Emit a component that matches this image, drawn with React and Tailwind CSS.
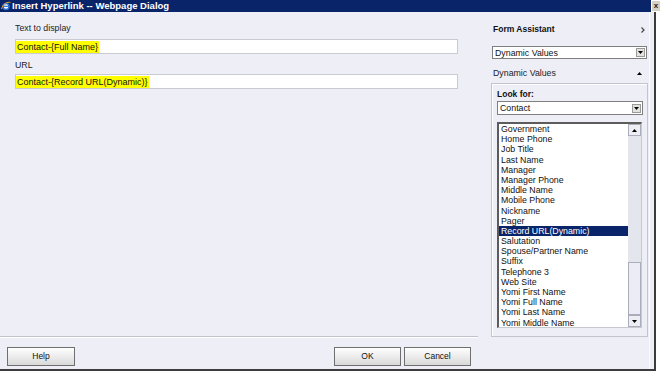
import React from 'react';

const fields = [
  'Government',
  'Home Phone',
  'Job Title',
  'Last Name',
  'Manager',
  'Manager Phone',
  'Middle Name',
  'Mobile Phone',
  'Nickname',
  'Pager',
  'Record URL(Dynamic)',
  'Salutation',
  'Spouse/Partner Name',
  'Suffix',
  'Telephone 3',
  'Web Site',
  'Yomi First Name',
  'Yomi Full Name',
  'Yomi Last Name',
  'Yomi Middle Name',
];

const DownArrow = () => (
  <svg width="5" height="3" viewBox="0 0 5 3">
    <path d="M0 0h5L2.5 3z" fill="#000" />
  </svg>
);

const UpArrow = () => (
  <svg width="5" height="3" viewBox="0 0 5 3">
    <path d="M0 3h5L2.5 0z" fill="#000" />
  </svg>
);

const DropButton = () => (
  <div className="w-[9px] h-[9px] bg-[#e4e2dc] border border-[#9a9a9a] flex items-center justify-center">
    <DownArrow />
  </div>
);

const Select = ({ value, className }) => (
  <div className={`bg-white border border-[#7f7f7f] flex items-center justify-between pl-[2px] pr-[1px] ${className}`}>
    <span className="text-[8.8px] leading-[10px] text-[#111]">{value}</span>
    <DropButton />
  </div>
);

const Button = ({ label, className }) => (
  <button className={`h-[19px] border border-[#6f6f6f] bg-gradient-to-b from-white to-[#d9d9d9] text-[8.5px] text-[#111] ${className}`}>
    {label}
  </button>
);

const IeIcon = () => (
  <svg width="10" height="10" viewBox="0 0 10 10">
    <circle cx="5" cy="5.5" r="3" fill="#fff" stroke="#2a6fd6" strokeWidth="1.5" />
    <path d="M2.2 5.3h5.6" stroke="#2a6fd6" strokeWidth="1.2" />
    <path d="M0.5 8C2 2.5 6.5 0.5 9.5 1.5" fill="none" stroke="#f0a020" strokeWidth="1" />
  </svg>
);

export default function App() {
  return (
    <div className="w-[660px] h-[374px] bg-white overflow-hidden font-['Liberation_Sans',Arial,sans-serif]">
      {/* title bar */}
      <div className="h-[12px] flex">
        <div className="w-[651px] bg-[#0a246a] flex items-center">
          <div className="w-[12px] flex justify-center">
            <IeIcon />
          </div>
          <span className="text-white font-bold text-[9.5px] leading-[12px]">Insert Hyperlink -- Webpage Dialog</span>
        </div>
        <div className="w-[9px] h-[11px] bg-[#d4d0c8] border-l border-t border-white flex items-center justify-center text-[8px] leading-none font-bold text-[#222]">
          x
        </div>
      </div>

      <div className="w-[656px] h-[359px] flex bg-[#eeeef7] border-r-2 border-b-2 border-[#3c3c3c]">
        {/* left side */}
        <div className="w-[478px] flex flex-col">
          <div className="flex-1 pl-[15px] pt-[11px]">
            <div className="text-[8.8px] leading-[11px] text-[#222]">Text to display</div>
            <div className="mt-[5px] w-[443px] h-[15px] bg-white border border-[#cacad3] flex items-center">
              <span className="bg-[#ffff00] text-[9px] leading-[12px] text-[#111] px-[1px]">Contact-{'{'}Full Name{'}'}</span>
            </div>
            <div className="mt-[6px] text-[8.8px] leading-[11px] text-[#222]">URL</div>
            <div className="mt-[3px] w-[443px] h-[15px] bg-white border border-[#cacad3] flex items-center">
              <span className="bg-[#ffff00] text-[9px] leading-[12px] text-[#111] px-[1px]">Contact-{'{'}Record URL(Dynamic){'}'}</span>
            </div>
          </div>
          <div className="h-[33px] border-t border-[#c2c2cc] shadow-[inset_0_1px_0_#fff] flex items-start pt-[10px] pl-[7px] pr-[7px]">
            <Button label="Help" className="w-[68px]" />
            <div className="flex-1" />
            <Button label="OK" className="w-[67px]" />
            <Button label="Cancel" className="w-[67px] ml-[3px]" />
          </div>
        </div>

        {/* right side: form assistant */}
        <div className="w-[172px] border-r border-[#fbfbff] pt-[12px]">
          <div className="ml-[15px] w-[152px] h-[11px] flex items-center justify-between">
            <span className="font-bold text-[8.5px] leading-[11px] text-[#111]">Form Assistant</span>
            <svg width="4" height="6" viewBox="0 0 4 6">
              <path d="M0.5 0.5L3 3L0.5 5.5" fill="none" stroke="#444" strokeWidth="1.2" />
            </svg>
          </div>
          <Select value="Dynamic Values" className="mt-[11px] ml-[14px] w-[155px] h-[13px]" />
          <div className="mt-[9px] ml-[15px] w-[152px] h-[11px] flex items-center justify-between">
            <span className="text-[8.8px] leading-[11px] text-[#222]">Dynamic Values</span>
            <div className="mr-[3px]">
              <UpArrow />
            </div>
          </div>
          <div className="mt-[4px] ml-[13px] w-[157px] h-[254px] border border-[#c4c4ce] shadow-[inset_1px_1px_0_#fff] pl-[5px] pt-[5px]">
            <div className="font-bold text-[8.5px] leading-[11px] text-[#111]">Look for:</div>
            <Select value="Contact" className="mt-[1px] w-[146px] h-[14px]" />
            <div className="mt-[7px] w-[145px] h-[206px] border-t-2 border-l-2 border-[#5c5c5c] border-r border-b border-r-[#c8c8d0] border-b-[#c8c8d0] bg-white flex">
              <div className="w-[129px] overflow-hidden">
                {fields.map((f) => (
                  <div
                    key={f}
                    className={`h-[10.2px] pl-[2px] text-[8.8px] leading-[10.2px] whitespace-nowrap ${
                      f === 'Record URL(Dynamic)' ? 'bg-[#0a246a] text-white' : 'text-[#111]'
                    }`}
                  >
                    {f}
                  </div>
                ))}
              </div>
              <div className="w-[13px] flex flex-col">
                <div className="h-[12px] border border-[#a9aeba] bg-[#eceef4] flex items-center justify-center">
                  <UpArrow />
                </div>
                <div className="h-[126px] bg-[#e3e6ed]" />
                <div className="h-[53px] border border-[#a9aeba] bg-[#ececf6]" />
                <div className="h-[12px] border border-[#a9aeba] bg-[#eceef4] flex items-center justify-center">
                  <DownArrow />
                </div>
              </div>
            </div>
          </div>
        </div>
        <div className="flex-1" />
      </div>
    </div>
  );
}
